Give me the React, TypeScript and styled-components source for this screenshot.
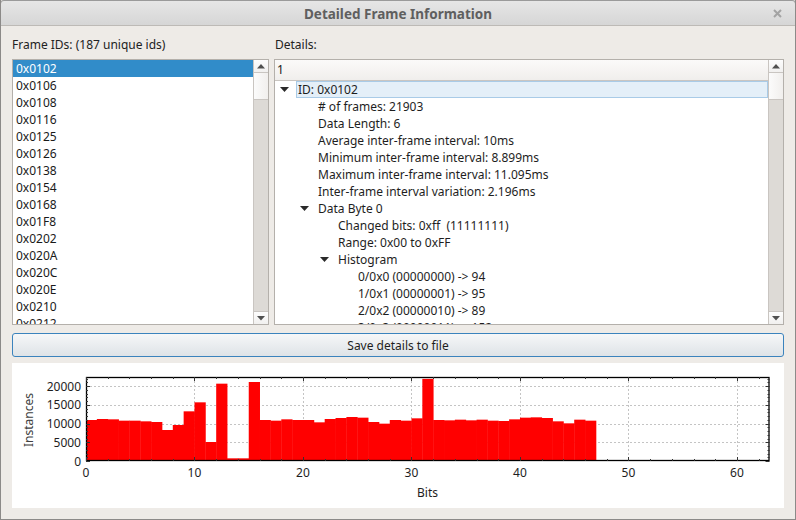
import React from "react";
import styled, { createGlobalStyle, css } from "styled-components";

const GlobalStyle = createGlobalStyle`
  html, body { margin: 0; padding: 0; background: #eeebe7; }
  body { font-family: "Noto Sans", "DejaVu Sans", sans-serif; font-size: 12px; color: #1e1e1e; }
  * { box-sizing: border-box; }
`;

const Window = styled.div`
  width: 796px;
  height: 520px;
  display: flex;
  flex-direction: column;
  background: #eeebe7;
  border: 1px solid #8c8a88;
  border-top: none;
  overflow: hidden;
`;

const TitleBar = styled.div`
  height: 26px;
  flex: none;
  display: grid;
  grid-template-columns: 1fr auto 1fr;
  align-items: center;
  background: linear-gradient(#e6e6e6, #d6d6d6);
  border-bottom: 1px solid #bdbab6;
  margin: 0 -1px;
  border-top: 1px solid #9a9a9a;
  border-left: 1px solid #8c8a88;
  border-right: 1px solid #8c8a88;
  border-radius: 4px 4px 0 0;
`;

const Title = styled.div`
  grid-column: 2;
  font-weight: bold;
  font-size: 13.5px;
  color: #5f5f5f;
  padding-top: 1px;
`;

const CloseButton = styled.div`
  grid-column: 3;
  justify-self: end;
  margin-right: 13px;
  display: flex;
  align-items: center;
`;

const Body = styled.div`
  flex: 1;
  display: flex;
  flex-direction: column;
  padding: 10px 11px 11px 11px;
`;

const TopArea = styled.div`
  display: grid;
  grid-template-columns: 257px 510px;
  grid-template-rows: 17px 266px;
  column-gap: 5px;
  row-gap: 6px;
`;

const Label = styled.div<{ $indent?: number }>`
  line-height: 17px;
  padding-left: ${(p) => p.$indent ?? 0}px;
  color: #222;
`;

const Panel = styled.div`
  border: 1px solid #b4b0ab;
  background: #fff;
  display: flex;
  overflow: hidden;
`;

const ListItems = styled.div`
  flex: 1;
  display: flex;
  flex-direction: column;
  overflow: hidden;
`;

const ListItem = styled.div<{ $selected?: boolean }>`
  height: 17px;
  flex: none;
  line-height: 17px;
  padding-left: 3px;
  color: #1a1a1a;
  ${(p) =>
    p.$selected &&
    css`
      background: #318cc9;
      color: #fff;
    `}
`;

const ScrollBar = styled.div`
  width: 15px;
  flex: none;
  display: flex;
  flex-direction: column;
  border-left: 1px solid #c9c5c1;
  background: #dddad6;
`;

const ScrollButton = styled.div<{ $down?: boolean }>`
  height: 13px;
  flex: none;
  display: flex;
  align-items: center;
  justify-content: center;
  background: linear-gradient(#fdfdfd, #f1f0ef);
  ${(p) =>
    p.$down
      ? css`border-top: 1px solid #c9c5c1;`
      : css`border-bottom: 1px solid #c9c5c1;`}
`;

const Thumb = styled.div`
  height: 27px;
  flex: none;
  background: linear-gradient(90deg, #fbfbfb, #f1efed);
  border-bottom: 1px solid #c9c5c1;
`;

const Track = styled.div`
  flex: 1;
`;

const TreeArea = styled.div`
  flex: 1;
  display: flex;
  flex-direction: column;
  overflow: hidden;
`;

const TreeHeader = styled.div`
  height: 21px;
  flex: none;
  line-height: 20px;
  padding-left: 2px;
  background: linear-gradient(#fbfaf9, #f0eeec);
  border-bottom: 1px solid #c9c5c1;
  color: #1a1a1a;
`;

const TreeRow = styled.div<{ $level: number }>`
  height: 17px;
  flex: none;
  display: flex;
  align-items: stretch;
  padding-left: ${(p) => p.$level * 20}px;
`;

const ArrowCell = styled.div`
  width: 21px;
  flex: none;
  display: flex;
  align-items: center;
  padding-left: 5px;
`;

const RowText = styled.div<{ $selected?: boolean }>`
  line-height: 17px;
  white-space: pre;
  color: #1e1e1e;
  padding-left: 2px;
  ${(p) =>
    p.$selected &&
    css`
      flex: 1;
      padding-left: 1px;
      line-height: 15px;
      background: #e4eff8;
      border: 1px solid #a9cbe7;
    `}
`;

const SaveButton = styled.button`
  margin-top: 8px;
  height: 24px;
  width: 100%;
  border: 1px solid #3b83bd;
  border-radius: 3px;
  background: linear-gradient(#f6f7f8, #dee3e7);
  font-family: "Noto Sans", "DejaVu Sans", sans-serif;
  font-size: 12px;
  color: #1e1e1e;
  padding: 0;
`;

const ChartPanel = styled.div`
  margin-top: 6px;
  height: 145px;
  background: #fff;
  display: flex;
`;

const ids = [
  "0x0102", "0x0106", "0x0108", "0x0116", "0x0125", "0x0126", "0x0138", "0x0154",
  "0x0168", "0x01F8", "0x0202", "0x020A", "0x020C", "0x020E", "0x0210", "0x0212",
];

type Row = { level: number; text: string; arrow?: boolean; selected?: boolean };
const rows: Row[] = [
  { level: 0, text: "ID: 0x0102", arrow: true, selected: true },
  { level: 1, text: "# of frames: 21903" },
  { level: 1, text: "Data Length: 6" },
  { level: 1, text: "Average inter-frame interval: 10ms" },
  { level: 1, text: "Minimum inter-frame interval: 8.899ms" },
  { level: 1, text: "Maximum inter-frame interval: 11.095ms" },
  { level: 1, text: "Inter-frame interval variation: 2.196ms" },
  { level: 1, text: "Data Byte 0", arrow: true },
  { level: 2, text: "Changed bits: 0xff  (11111111)" },
  { level: 2, text: "Range: 0x00 to 0xFF" },
  { level: 2, text: "Histogram", arrow: true },
  { level: 3, text: "0/0x0 (00000000) -> 94" },
  { level: 3, text: "1/0x1 (00000001) -> 95" },
  { level: 3, text: "2/0x2 (00000010) -> 89" },
  { level: 3, text: "3/0x3 (00000011) -> 152" },
];

const values = [
  10933, 11200, 11111, 10756, 10756, 10578, 10400, 8267, 9600, 13245,
  15645, 5067, 20622, 711, 711, 21067, 10933, 10756, 11111, 10933,
  10933, 10311, 11200, 11467, 11733, 11556, 10400, 9956, 10933, 10756,
  11378, 21903, 10933, 10844, 11022, 10844, 11022, 10756, 10667, 11111,
  11556, 11644, 11467, 10578, 10044, 11022, 10756,
];

const TreeArrow = () => (
  <svg width="9" height="5" viewBox="0 0 9 5">
    <polygon points="0,0 9,0 4.5,5" fill="#2a2a2a" />
  </svg>
);

const ScrollArrow = ({ down }: { down?: boolean }) => (
  <svg width="8" height="5" viewBox="0 0 8 5">
    <polygon points={down ? "0,0 8,0 4,4.5" : "0,4.5 8,4.5 4,0"} fill="#505050" />
  </svg>
);

const VScroll = () => (
  <ScrollBar>
    <ScrollButton>
      <ScrollArrow />
    </ScrollButton>
    <Thumb />
    <Track />
    <ScrollButton $down>
      <ScrollArrow down />
    </ScrollButton>
  </ScrollBar>
);

const Chart = () => {
  const W = 772;
  const H = 145;
  const L = 74;
  const R = 757.5;
  const T = 14;
  const B = 98;
  const xs = (R - L) / 63;
  const ymax = 22400;
  const x = (b: number) => L + b * xs;
  const y = (v: number) => B - (v / ymax) * (B - T);
  const ticks: React.ReactNode[] = [];
  for (let b = 0; b <= 63; b += 2) {
    const major = b % 10 === 0;
    const len = major ? 4 : 2;
    const px = Math.round(x(b)) + 0.5;
    ticks.push(<line key={"xb" + b} x1={px} x2={px} y1={B} y2={B - len} stroke="#333" />);
    ticks.push(<line key={"xt" + b} x1={px} x2={px} y1={T} y2={T + len} stroke="#333" />);
  }
  for (let v = 0; v <= 22000; v += 1000) {
    const major = v % 5000 === 0;
    const len = major ? 4 : 2;
    const py = Math.round(y(v)) + 0.5;
    ticks.push(<line key={"yl" + v} x1={L} x2={L + len} y1={py} y2={py} stroke="#333" />);
    ticks.push(<line key={"yr" + v} x1={R} x2={R - len} y1={py} y2={py} stroke="#333" />);
  }
  const grid: React.ReactNode[] = [];
  for (let b = 10; b <= 60; b += 10) {
    const px = Math.round(x(b)) + 0.5;
    grid.push(<line key={"gx" + b} x1={px} x2={px} y1={T} y2={B} stroke="#c4c4c4" strokeDasharray="2 2" />);
  }
  for (let v = 5000; v <= 20000; v += 5000) {
    const py = Math.round(y(v)) + 0.5;
    grid.push(<line key={"gy" + v} x1={L} x2={R} y1={py} y2={py} stroke="#c4c4c4" strokeDasharray="2 2" />);
  }
  const textStyle = { fontFamily: '"Noto Sans", "DejaVu Sans", sans-serif', fontSize: 12 };
  return (
    <svg width={W} height={H} viewBox={`0 0 ${W} ${H}`} style={textStyle}>
      {grid}
      {values.map((v, i) => (
        <rect key={i} x={x(i)} y={y(v)} width={xs + 0.4} height={B - y(v)} fill="#ff0000" />
      ))}
      <rect x={L + 0.5} y={T + 0.5} width={R - L - 1} height={B - T - 1} fill="none" stroke="#000" strokeWidth={1.3} />
      {ticks}
      {[0, 5000, 10000, 15000, 20000].map((v) => (
        <text key={v} x={69} y={y(v) + 4.5} textAnchor="end" fill="#1e1e1e">
          {v}
        </text>
      ))}
      {[0, 10, 20, 30, 40, 50, 60].map((b) => (
        <text key={b} x={x(b)} y={114} textAnchor="middle" fill="#1e1e1e">
          {b}
        </text>
      ))}
      <text x={415.5} y={133.5} textAnchor="middle" fill="#1e1e1e">
        Bits
      </text>
      <text transform="translate(20.5 57) rotate(-90)" textAnchor="middle" fill="#404040">
        Instances
      </text>
    </svg>
  );
};

export default function App() {
  return (
    <>
      <GlobalStyle />
      <Window>
        <TitleBar>
          <Title>Detailed Frame Information</Title>
          <CloseButton>
            <svg width="9" height="9" viewBox="0 0 9 9">
              <path d="M1 1 L8 8 M8 1 L1 8" stroke="#a3a3a3" strokeWidth="2" />
            </svg>
          </CloseButton>
        </TitleBar>
        <Body>
          <TopArea>
            <Label>Frame IDs: (187 unique ids)</Label>
            <Label $indent={1}>Details:</Label>
            <Panel>
              <ListItems>
                {ids.map((id, i) => (
                  <ListItem key={id} $selected={i === 0}>
                    {id}
                  </ListItem>
                ))}
              </ListItems>
              <VScroll />
            </Panel>
            <Panel>
              <TreeArea>
                <TreeHeader>1</TreeHeader>
                {rows.map((r, i) => (
                  <TreeRow key={i} $level={r.level}>
                    <ArrowCell>{r.arrow && <TreeArrow />}</ArrowCell>
                    <RowText $selected={r.selected}>{r.text}</RowText>
                  </TreeRow>
                ))}
              </TreeArea>
              <VScroll />
            </Panel>
          </TopArea>
          <SaveButton>Save details to file</SaveButton>
          <ChartPanel>
            <Chart />
          </ChartPanel>
        </Body>
      </Window>
    </>
  );
}
